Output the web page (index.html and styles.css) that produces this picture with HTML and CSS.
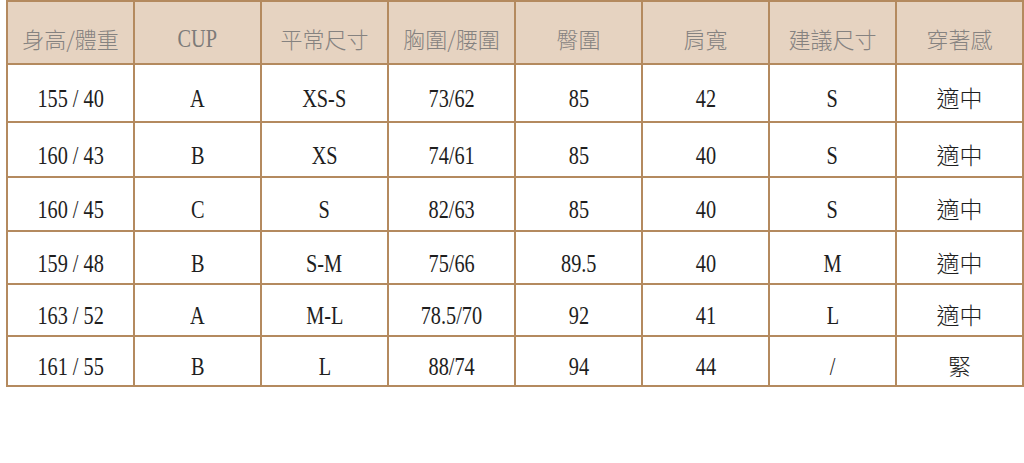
FILE: index.html
```html
<!DOCTYPE html>
<html lang="zh-Hant">
<head>
<meta charset="utf-8">
<title>尺寸表</title>
<link rel="stylesheet" href="styles.css">
</head>
<body>
<table class="size-table">
  <thead>
    <tr class="head-row">
      <th>身高/體重</th>
      <th><span class="lat">CUP</span></th>
      <th>平常尺寸</th>
      <th>胸圍/腰圍</th>
      <th>臀圍</th>
      <th>肩寬</th>
      <th>建議尺寸</th>
      <th>穿著感</th>
    </tr>
  </thead>
  <tbody>
    <tr class="r1">
      <td><span class="lat">155 / 40</span></td><td><span class="lat">A</span></td><td><span class="lat">XS-S</span></td><td><span class="lat">73/62</span></td><td><span class="lat">85</span></td><td><span class="lat">42</span></td><td><span class="lat">S</span></td><td class="cjk">適中</td>
    </tr>
    <tr class="r2">
      <td><span class="lat">160 / 43</span></td><td><span class="lat">B</span></td><td><span class="lat">XS</span></td><td><span class="lat">74/61</span></td><td><span class="lat">85</span></td><td><span class="lat">40</span></td><td><span class="lat">S</span></td><td class="cjk">適中</td>
    </tr>
    <tr class="r3">
      <td><span class="lat">160 / 45</span></td><td><span class="lat">C</span></td><td><span class="lat">S</span></td><td><span class="lat">82/63</span></td><td><span class="lat">85</span></td><td><span class="lat">40</span></td><td><span class="lat">S</span></td><td class="cjk">適中</td>
    </tr>
    <tr class="r4">
      <td><span class="lat">159 / 48</span></td><td><span class="lat">B</span></td><td><span class="lat">S-M</span></td><td><span class="lat">75/66</span></td><td><span class="lat">89.5</span></td><td><span class="lat">40</span></td><td><span class="lat">M</span></td><td class="cjk">適中</td>
    </tr>
    <tr class="r5">
      <td><span class="lat">163 / 52</span></td><td><span class="lat">A</span></td><td><span class="lat">M-L</span></td><td><span class="lat">78.5/70</span></td><td><span class="lat">92</span></td><td><span class="lat">41</span></td><td><span class="lat">L</span></td><td class="cjk">適中</td>
    </tr>
    <tr class="r6">
      <td><span class="lat">161 / 55</span></td><td><span class="lat">B</span></td><td><span class="lat">L</span></td><td><span class="lat">88/74</span></td><td><span class="lat">94</span></td><td><span class="lat">44</span></td><td><span class="lat">/</span></td><td class="cjk">緊</td>
    </tr>
  </tbody>
</table>
</body>
</html>
```
FILE: styles.css
```css
html, body {
  margin: 0;
  padding: 0;
  background: #ffffff;
}

.size-table {
  margin: 0 0 0 6px;
  width: 1018px;
  table-layout: fixed;
  border-collapse: separate;
  border-spacing: 0;
  border-top: 2px solid #b48a5f;
  border-left: 2px solid #b48a5f;
  font-family: "Noto Sans CJK TC", "Noto Sans CJK SC", sans-serif;
}

.size-table th,
.size-table td {
  border-right: 2px solid #b48a5f;
  border-bottom: 2px solid #b48a5f;
  padding: 0;
  text-align: center;
  vertical-align: middle;
  white-space: nowrap;
  overflow: hidden;
}

.size-table th {
  background: #e6d3c1;
  color: #858280;
  font-weight: 300;
  font-size: 22px;
  padding-top: 10px;
}

.size-table td {
  color: #1e1e1e;
  font-size: 23px;
  padding-top: 8px;
}

.lat {
  display: inline-block;
  font-family: "Liberation Serif", "Times New Roman", serif;
  font-weight: normal;
  font-size: 26px;
  transform: scaleX(0.78);
  transform-origin: center;
}

.size-table th .lat {
  color: #7d7b79;
}

.cjk {
  font-family: "Noto Sans CJK TC", "Noto Sans CJK SC", sans-serif;
  font-weight: 300;
  color: #2c2c2c;
}

.head-row { height: 63px; }
.r1 { height: 58px; }
.r2 { height: 55px; }
.r3 { height: 54px; }
.r4 { height: 53px; }
.r5 { height: 52px; }
.r6 { height: 50px; }
```
